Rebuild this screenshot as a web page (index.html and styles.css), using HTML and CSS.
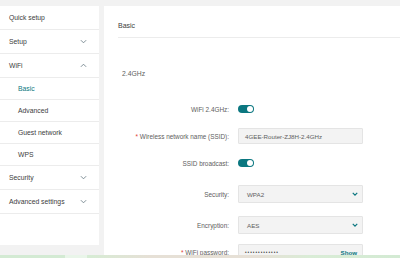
FILE: index.html
```html
<!DOCTYPE html>
<html lang="en">
<head>
  <meta charset="UTF-8">
  <title>WiFi - Basic</title>
  <link rel="stylesheet" href="styles.css">
</head>
<body>
  <div class="layout">
    <nav class="sidebar">
      <div class="nav-item">Quick setup</div>
      <div class="nav-item">Setup
        <svg class="chev" viewBox="0 0 8 5"><path d="M1 1l3 3 3-3"/></svg>
      </div>
      <div class="nav-item">WiFi
        <svg class="chev" viewBox="0 0 8 5"><path d="M1 4l3-3 3 3"/></svg>
      </div>
      <div class="nav-sub active">Basic</div>
      <div class="nav-sub">Advanced</div>
      <div class="nav-sub">Guest network</div>
      <div class="nav-sub">WPS</div>
      <div class="nav-item">Security
        <svg class="chev" viewBox="0 0 8 5"><path d="M1 1l3 3 3-3"/></svg>
      </div>
      <div class="nav-item">Advanced settings
        <svg class="chev" viewBox="0 0 8 5"><path d="M1 1l3 3 3-3"/></svg>
      </div>
    </nav>

    <main class="panel">
      <div class="panel-header">Basic</div>
      <div class="section-title">2.4GHz</div>

      <div class="form">
        <div class="row">
          <label class="label">WiFi 2.4GHz:</label>
          <span class="toggle"><span class="knob"></span></span>
        </div>
        <div class="row">
          <label class="label"><span class="req">*</span> Wireless network name (SSID):</label>
          <div class="field">4GEE-Router-ZJ8H-2.4GHz</div>
        </div>
        <div class="row">
          <label class="label">SSID broadcast:</label>
          <span class="toggle"><span class="knob"></span></span>
        </div>
        <div class="row row-select">
          <label class="label">Security:</label>
          <div class="field select">WPA2
            <svg class="select-chev" viewBox="0 0 8 5"><path d="M1 1l3 3 3-3"/></svg>
          </div>
        </div>
        <div class="row row-select">
          <label class="label">Encryption:</label>
          <div class="field select">AES
            <svg class="select-chev" viewBox="0 0 8 5"><path d="M1 1l3 3 3-3"/></svg>
          </div>
        </div>
        <div class="row">
          <label class="label"><span class="req">*</span> WiFi password:</label>
          <div class="field password"><span class="dots">•••••••••••••</span><span class="show">Show</span></div>
        </div>
      </div>
    </main>
  </div>

  <div class="progress"></div>
</body>
</html>
```

FILE: styles.css
```css
:root {
  --teal: #0b7780;
  --page: #f2f2f2;
  --line: #ececec;
  --text: #3c3c3c;
  --muted: #606060;
}

* {
  margin: 0;
  padding: 0;
  box-sizing: border-box;
}

body {
  font-family: "Liberation Sans", Arial, sans-serif;
  background-color: var(--page);
  color: var(--text);
  height: 258px;
  overflow: hidden;
}

.layout {
  display: flex;
  align-items: flex-start;
  padding-top: 6px;
}

/* Sidebar */

.sidebar {
  width: 99px;
  height: 239px;
  background-color: #fff;
  margin-right: 5px;
  flex-shrink: 0;
}

.nav-item,
.nav-sub {
  display: flex;
  align-items: center;
  justify-content: space-between;
  border-bottom: 1px solid var(--line);
  font-size: 6.8px;
  color: var(--text);
}

.nav-item {
  height: 24px;
  padding: 0 12px 0 9px;
}

.nav-sub {
  height: 22px;
  padding-left: 18px;
}

.nav-sub.active {
  color: var(--teal);
}

.chev {
  width: 7px;
  height: 5px;
  fill: none;
  stroke: #6e7f88;
  stroke-width: 1;
}

/* Main panel */

.panel {
  flex: 1;
  height: 252px;
  background-color: #fff;
  padding-left: 14px;
}

.panel-header {
  height: 32px;
  line-height: 39px;
  font-size: 7px;
  color: var(--text);
  border-bottom: 1px solid var(--line);
}

.section-title {
  height: 60px;
  padding-left: 4px;
  padding-top: 32px;
  font-size: 6.8px;
  color: var(--muted);
}

.form {
  display: flex;
  flex-direction: column;
  gap: 9px;
  margin-left: -14px;
  margin-top: 2px;
}

.row {
  display: flex;
  align-items: center;
  height: 18px;
}

.row-select {
  margin-top: 4px;
}

.label {
  width: 125px;
  text-align: right;
  margin-right: 9px;
  font-size: 6.4px;
  color: var(--muted);
}

.req {
  color: #e03c31;
}

.toggle {
  position: relative;
  width: 16px;
  height: 8px;
  border-radius: 4px;
  background-color: var(--teal);
}

.knob {
  position: absolute;
  right: 1px;
  top: 1px;
  width: 6px;
  height: 6px;
  border-radius: 50%;
  background-color: #fff;
}

.field {
  width: 125px;
  height: 16px;
  display: flex;
  align-items: center;
  padding-left: 6px;
  background-color: #f3f3f3;
  border: 1px solid #e4e4e4;
  border-radius: 1px;
  font-size: 6.2px;
  color: var(--muted);
}

.select {
  height: 18px;
  justify-content: space-between;
  padding-left: 8px;
  padding-right: 4px;
}

.select-chev {
  width: 6px;
  height: 4px;
  fill: none;
  stroke: var(--teal);
  stroke-width: 1.6;
}

.password {
  justify-content: space-between;
  padding-right: 5px;
}

.dots {
  font-size: 4.6px;
  letter-spacing: 1px;
  color: #444;
}

.show {
  font-size: 6.2px;
  font-weight: bold;
  color: var(--teal);
}

/* loading strip along the bottom edge */
.progress {
  position: fixed;
  left: 0;
  right: 0;
  bottom: 0;
  height: 3px;
  background: linear-gradient(to right, #d3ead3 0, #d3ead3 65px, #e9f5e9 65px, #e9f5e9 87px, #d6ecd4 87px, #e6e0d6 150px, #e6e0d6 260px, #d9ecd6 310px, #d3ead3 100%);
}
```
